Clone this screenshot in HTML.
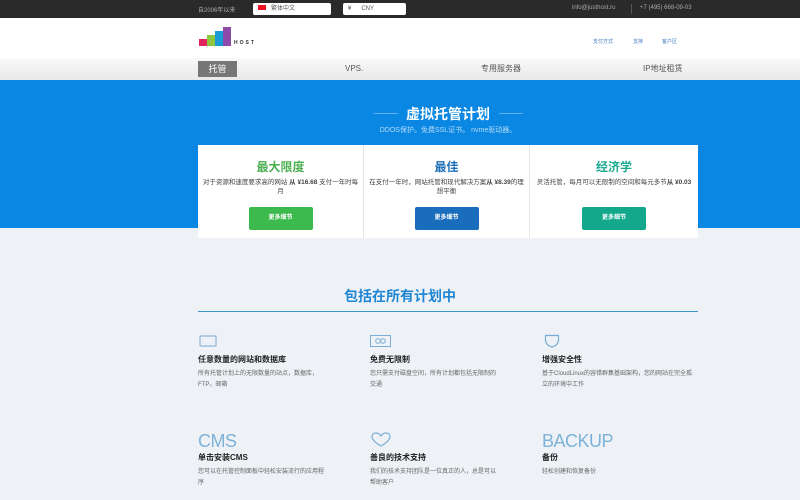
<!DOCTYPE html>
<html><head><meta charset="utf-8"><style>
*{margin:0;padding:0;box-sizing:border-box}
body{width:800px;height:500px;overflow:hidden;background:#eef1f6;font-family:"Liberation Sans","Noto Sans CJK SC",sans-serif;position:relative}
.a{position:absolute}
.top{top:0;left:0;width:800px;height:18px;background:#2a2a2a;color:#aaa;font-size:6px}
.sel{background:#fff;border-radius:2px;height:12px;top:3px;color:#555;font-size:6px;line-height:12px}
.hdr{top:18px;left:0;width:800px;height:40px;background:#fff}
.nav{top:58px;left:0;width:800px;height:22px;background:linear-gradient(#fafafa,#e9e9e9);font-size:8px;color:#555;line-height:22px}
.blue{top:80px;left:0;width:800px;height:148px;background:#0a86e3}
.card{top:145px;height:93px;width:166px;background:#fff;text-align:center;border-right:1px solid #e6e6e6}
.card h3{font-size:12px;margin-top:14px;font-weight:bold;line-height:16px}
.card p{font-size:6.5px;color:#444;line-height:9px;margin:3px 4px 0;height:20px}
.btn{display:block;margin:9px auto 0;width:64px;height:23px;border-radius:2px;color:#fff;font-size:6px;line-height:23px;font-weight:bold}
.f{width:160px}
.f h4{font-size:8px;color:#222;font-weight:bold}
.f p{font-size:6px;color:#666;line-height:11px;margin-top:4px;width:130px}
.big{font-size:18px;color:#7db3d8;letter-spacing:-0.5px;line-height:18px}
</style></head><body>
<div class="a top">
 <span class="a" style="left:198px;top:5px">自2006年以来</span>
 <div class="a sel" style="left:253px;width:78px"><span style="display:inline-block;width:8px;height:5px;background:#e12;margin:0 5px 0 5px"></span>繁体中文</div>
 <div class="a sel" style="left:343px;width:63px;padding-left:5px">¥ &nbsp;&nbsp;&nbsp;&nbsp;&nbsp;CNY</div>
 <span class="a" style="left:572px;top:5px">info@justhost.ru</span>
 <span class="a" style="left:631px;top:4px;width:1px;height:10px;background:#555"></span>
 <span class="a" style="left:640px;top:5px">+7 (495) 668-09-03</span>
</div>
<div class="a hdr">
 <div class="a" style="left:199px;top:21px;width:8px;height:7px;background:#e2245f"></div>
 <div class="a" style="left:207px;top:17px;width:8px;height:11px;background:#8dc63f"></div>
 <div class="a" style="left:215px;top:13px;width:8px;height:15px;background:#1a9bd6"></div>
 <div class="a" style="left:223px;top:9px;width:8px;height:19px;background:#8e4aa8"></div>
 <span class="a" style="left:234px;top:22px;font-size:5px;font-weight:bold;letter-spacing:2px;color:#333">HOST</span>
 <span class="a" style="left:593px;top:20px;font-size:5px;color:#3a7bc0">支付方式</span>
 <span class="a" style="left:633px;top:20px;font-size:5px;color:#3a7bc0">支持</span>
 <span class="a" style="left:662px;top:20px;font-size:5px;color:#3a7bc0">客户区</span>
</div>
<div class="a nav">
 <span class="a" style="left:198px;top:3px;width:39px;height:16px;background:#777;color:#fff;text-align:center;line-height:16px;font-size:9px">托管</span>
 <span class="a" style="left:345px">VPS.</span>
 <span class="a" style="left:481px">专用服务器</span>
 <span class="a" style="left:643px">IP地址租赁</span>
</div>
<div class="a blue">
 <div class="a" style="left:96px;width:704px;top:24px;text-align:center;color:#fff;font-size:14px;font-weight:bold">虚拟托管计划</div>
 <div class="a" style="left:374px;top:33px;width:24px;height:1px;background:#5fb0ee;z-index:2"></div>
 <div class="a" style="left:499px;top:33px;width:24px;height:1px;background:#5fb0ee;z-index:2"></div>
 <div class="a" style="left:96px;width:704px;top:45px;text-align:center;color:#b5dcf8;font-size:7px">DDOS保护。免费SSL证书。 nvme驱动器。</div>
</div>
<div class="a card" style="left:198px"><h3 style="color:#4caf50">最大限度</h3><p>对于资源和速度要求高的网站 <b>从 ¥16.68</b> 支付一年时每月</p><span class="btn" style="background:#3dba4e">更多细节</span></div>
<div class="a card" style="left:364px"><h3 style="color:#1e6fb8">最佳</h3><p>在支付一年时，网站托管和现代解决方案<b>从 ¥8.39</b>的理想平衡</p><span class="btn" style="background:#1a6dbd">更多细节</span></div>
<div class="a card" style="left:530px;width:168px;border:none"><h3 style="color:#19a98f">经济学</h3><p>灵活托管，每月可以无限制的空间和每元多节<b>从 ¥0.03</b></p><span class="btn" style="background:#13a88c">更多细节</span></div>
<div class="a" style="left:0;width:800px;top:286px;text-align:center;color:#1f86d4;font-size:14px;font-weight:bold">包括在所有计划中</div>
<div class="a" style="left:198px;top:311px;width:500px;height:1px;background:#3a95c8"></div>

<svg class="a" style="left:199px;top:335px" width="20" height="12"><rect x="1" y="1" width="16" height="10" rx="1" fill="none" stroke="#8ab8dc" stroke-width="1.2"/></svg>
<div class="a f" style="left:198px;top:354px"><h4>任意数量的网站和数据库</h4><p>所有托管计划上的无限数量的站点，数据库，FTP，邮箱</p></div>
<svg class="a" style="left:370px;top:335px" width="22" height="12"><rect x="0.5" y="0.5" width="20" height="11" fill="none" stroke="#7aaed6"/><circle cx="8" cy="6" r="2.3" fill="none" stroke="#7aaed6"/><circle cx="13" cy="6" r="2.3" fill="none" stroke="#7aaed6"/></svg>
<div class="a f" style="left:370px;top:354px"><h4>免费无限制</h4><p>您只需支付磁盘空间，所有计划都包括无限制的交通</p></div>
<svg class="a" style="left:544px;top:334px" width="16" height="14"><path d="M1.5 1.5 H14.5 V6 Q14.5 11 8 13 Q1.5 11 1.5 6 Z" fill="none" stroke="#7aaed6" stroke-width="1.2"/></svg>
<div class="a f" style="left:542px;top:354px"><h4>增强安全性</h4><p style="width:155px">基于CloudLinux的容错群集基础架构，您的网站在完全孤立的环境中工作</p></div>

<div class="a big" style="left:198px;top:432px">CMS</div>
<div class="a f" style="left:198px;top:452px"><h4>单击安装CMS</h4><p>您可以在托管控制面板中轻松安装流行的应用程序</p></div>
<svg class="a" style="left:371px;top:432px" width="20" height="16"><path d="M10 14 C3 10 1 7 1 4.5 C1 2 3 1 5 1 C7 1 9 2.5 10 4 C11 2.5 13 1 15 1 C17 1 19 2 19 4.5 C19 7 17 10 10 14 Z" fill="none" stroke="#7aaed6" stroke-width="1.2"/></svg>
<div class="a f" style="left:370px;top:452px"><h4>善良的技术支持</h4><p>我们的技术支持团队是一位真正的人，总是可以帮助客户</p></div>
<div class="a big" style="left:542px;top:432px">BACKUP</div>
<div class="a f" style="left:542px;top:452px"><h4>备份</h4><p>轻松创建和恢复备份</p></div>
</body></html>
